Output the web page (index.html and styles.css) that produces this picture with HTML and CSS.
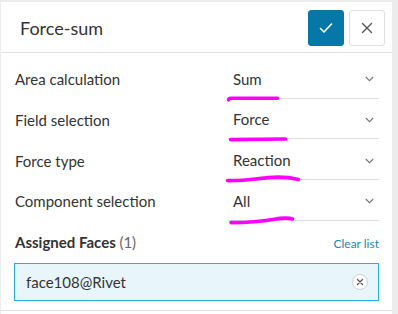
FILE: index.html
```html
<!DOCTYPE html>
<html>
<head>
<meta charset="utf-8">
<link rel="stylesheet" href="styles.css">
</head>
<body>
<div class="panel">
  <div class="header">
    <h1 class="title">Force-sum</h1>
    <div class="actions">
      <button class="btn btn-ok" aria-label="Save">
        <svg width="14" height="12" viewBox="0 0 14 12"><path d="M1.5 6.5 L5 10 L12.5 2" fill="none" stroke="#fff" stroke-width="1.6" stroke-linecap="round" stroke-linejoin="round"/></svg>
      </button>
      <button class="btn btn-close" aria-label="Close">
        <svg width="12" height="12" viewBox="0 0 12 12"><path d="M1.5 1.5 L10.5 10.5 M10.5 1.5 L1.5 10.5" fill="none" stroke="#555" stroke-width="1.4" stroke-linecap="round"/></svg>
      </button>
    </div>
  </div>
  <div class="form">
    <div class="row">
      <span class="label">Area calculation</span>
      <div class="select"><span>Sum</span><svg class="chev" width="9" height="6" viewBox="0 0 9 6"><path d="M0.8 1 L4.5 4.7 L8.2 1" fill="none" stroke="#777" stroke-width="1.1"/></svg></div>
    </div>
    <div class="row">
      <span class="label">Field selection</span>
      <div class="select"><span>Force</span><svg class="chev" width="9" height="6" viewBox="0 0 9 6"><path d="M0.8 1 L4.5 4.7 L8.2 1" fill="none" stroke="#777" stroke-width="1.1"/></svg></div>
    </div>
    <div class="row">
      <span class="label">Force type</span>
      <div class="select"><span>Reaction</span><svg class="chev" width="9" height="6" viewBox="0 0 9 6"><path d="M0.8 1 L4.5 4.7 L8.2 1" fill="none" stroke="#777" stroke-width="1.1"/></svg></div>
    </div>
    <div class="row">
      <span class="label">Component selection</span>
      <div class="select"><span>All</span><svg class="chev" width="9" height="6" viewBox="0 0 9 6"><path d="M0.8 1 L4.5 4.7 L8.2 1" fill="none" stroke="#777" stroke-width="1.1"/></svg></div>
    </div>
    <div class="assigned-head">
      <span class="assigned-title">Assigned Faces <span class="count">(1)</span></span>
      <a class="clear">Clear list</a>
    </div>
    <div class="chip-box">
      <span class="chip-text">face108@Rivet</span>
      <span class="remove">
        <svg width="8" height="8" viewBox="0 0 8 8"><path d="M1.5 1.5 L6.5 6.5 M6.5 1.5 L1.5 6.5" fill="none" stroke="#555" stroke-width="1.3" stroke-linecap="round"/></svg>
      </span>
    </div>
  </div>
  <div class="separator"></div>
</div>
<svg class="marks" width="398" height="314" viewBox="0 0 398 314">
  <g fill="none" stroke="#ff00ff" stroke-width="3.6" stroke-linecap="round" stroke-linejoin="round">
    <path d="M228.5 100 Q228.5 98.3 231 98.3 L277.5 98.3"/>
    <path d="M230.5 139.6 L285.5 139"/>
    <path d="M227.5 180.6 C245 181 257 178.5 268 177.6 C281 176.4 291 177.6 298.5 179.4"/>
    <path d="M231 222.6 C248 222.6 262 221.5 273 219.5 C282 217.8 289 217.8 292.5 219"/>
  </g>
</svg>
</body>
</html>
```

FILE: styles.css
```css
* { box-sizing: border-box; }
html, body { margin: 0; padding: 0; }
body {
  background: #ececec;
  font-family: Lato, "Open Sans", sans-serif;
  color: #333;
  width: 398px;
  height: 314px;
  overflow: hidden;
  position: relative;
}
.panel {
  margin: 2px 6px 0 1px;
  background: #fff;
  height: 312px;
}
.header {
  height: 51px;
  border-bottom: 1px solid #e2e2e2;
  display: flex;
  align-items: center;
  justify-content: space-between;
  padding: 1px 7px 0 19px;
}
.title {
  margin: 0;
  font-size: 18px;
  font-weight: 400;
  color: #333;
}
.actions { display: flex; gap: 5px; }
.btn {
  width: 36px;
  height: 36px;
  border-radius: 3px;
  padding: 0;
  display: flex;
  align-items: center;
  justify-content: center;
}
.btn-ok { background: #0678a8; border: 1px solid #0678a8; }
.btn-close { background: #fff; border: 1px solid #e0e0e0; }
.form { padding: 5px 13px 0 13px; }
.row {
  display: grid;
  grid-template-columns: 1fr 151px;
  height: 40.67px;
}
.label {
  font-size: 15px;
  padding-left: 1px;
  align-self: center;
  padding-top: 2px;
}
.select {
  border-bottom: 1px solid #dedede;
  display: flex;
  align-items: center;
  justify-content: space-between;
  padding: 2px 5px 0 5px;
  font-size: 15px;
}
.chev { margin-top: 1px; }
.assigned-head {
  display: flex;
  justify-content: space-between;
  align-items: baseline;
  margin-top: 11px;
  line-height: 20px;
  padding-left: 1px;
}
.assigned-title { font-size: 15px; font-weight: 700; color: #333; }
.count { font-weight: 400; color: #666; }
.clear { font-size: 12px; color: #2188b8; }
.chip-box {
  margin-top: 9px;
  height: 38px;
  border: 1px solid #23b0e2;
  background: #e8f5fb;
  display: flex;
  align-items: center;
  justify-content: space-between;
  padding: 0 10px 0 11px;
}
.chip-text { font-size: 15px; color: #333; }
.remove {
  width: 16px;
  height: 16px;
  border-radius: 50%;
  border: 1px solid #cfcfcf;
  background: #fff;
  display: flex;
  align-items: center;
  justify-content: center;
}
.separator {
  margin-top: 9px;
  border-top: 1px solid #e2e2e2;
}
.marks {
  position: absolute;
  left: 0;
  top: 0;
  pointer-events: none;
}
```
